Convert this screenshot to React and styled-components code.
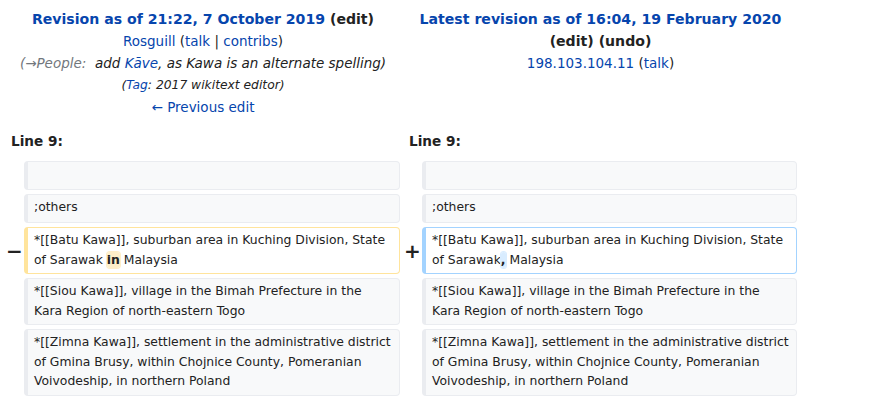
import React from 'react';
import styled, { createGlobalStyle } from 'styled-components';

const GlobalStyle = createGlobalStyle`
  body {
    margin: 0;
    background: #fff;
    font-family: 'DejaVu Sans', sans-serif;
    color: #222;
  }
`;

const Page = styled.div`
  padding: 8px 0 0 6px;
  width: 792px;
`;

const Grid = styled.div`
  display: grid;
  grid-template-columns: 14px 376px 14px 375px;
  column-gap: 4px;
  row-gap: 4px;
  align-items: center;
`;

const Header = styled.div`
  grid-column: span 2;
  text-align: center;
  font-size: 13.5px;
  line-height: 22px;
  align-self: start;
`;

const Title = styled.div`
  font-weight: bold;
  font-size: 14.1px;
  color: #0645ad;
`;

const Dark = styled.span`
  color: #222;
`;

const Link = styled.span`
  color: #0645ad;
`;

const Summary = styled.div`
  font-style: italic;
  color: #222;
  white-space: pre;
`;

const Autocomment = styled.span`
  color: #72777d;
`;

const Tag = styled.div`
  font-style: italic;
  font-size: 12.3px;
`;

const LineNo = styled.div`
  grid-column: span 2;
  font-weight: bold;
  font-size: 13.6px;
  padding: 11px 0 8px 5px;
`;

const Marker = styled.div`
  font-weight: bold;
  font-size: 20px;
  line-height: 1;
  text-align: center;
  color: #222;
`;

const Cell = styled.div`
  box-sizing: border-box;
  font-size: 12.38px;
  line-height: 19.5px;
  padding: 3px 7px 3px 6px;
  min-height: 29px;
  border-style: solid;
  border-width: 1px 1px 1px 4px;
  border-radius: 4px;
  border-color: ${(p) =>
    p.$kind === 'del' ? '#ffe49c' : p.$kind === 'add' ? '#a3d3ff' : '#eaecf0'};
  background: ${(p) => (p.$kind ? '#fff' : '#f8f9fa')};
  align-self: stretch;
`;

const Change = styled.span`
  font-weight: bold;
  border-radius: 3px;
  padding: 1px 0;
  background: ${(p) => (p.$kind === 'del' ? '#feeec8' : '#d8ecff')};
  box-shadow: 0 0 0 1px ${(p) => (p.$kind === 'del' ? '#feeec8' : '#d8ecff')};
`;

const context = ['', ';others'];

const after = [
  '*[[Siou Kawa]], village in the Bimah Prefecture in the Kara Region of north-eastern Togo',
  '*[[Zimna Kawa]], settlement in the administrative district of Gmina Brusy, within Chojnice County, Pomeranian Voivodeship, in northern Poland',
];

export default function App() {
  return (
    <>
      <GlobalStyle />
      <Page>
        <Grid>
          <Header>
            <Title>
              Revision as of 21:22, 7 October 2019 <Dark>(edit)</Dark>
            </Title>
            <div>
              <Link>Rosguill</Link> (<Link>talk</Link> | <Link>contribs</Link>)
            </div>
            <Summary>
              <Autocomment>(→People: </Autocomment> add <Link>Kāve</Link>, as Kawa is an alternate spelling)
            </Summary>
            <Tag>
              (<Link>Tag</Link>: 2017 wikitext editor)
            </Tag>
            <div>
              <Link>← Previous edit</Link>
            </div>
          </Header>
          <Header>
            <Title>Latest revision as of 16:04, 19 February 2020</Title>
            <Title>
              <Dark>(edit) (undo)</Dark>
            </Title>
            <div>
              <Link>198.103.104.11</Link> (<Link>talk</Link>)
            </div>
          </Header>

          <LineNo>Line 9:</LineNo>
          <LineNo>Line 9:</LineNo>

          {context.map((t, i) => (
            <React.Fragment key={i}>
              <Marker />
              <Cell>{t}</Cell>
              <Marker />
              <Cell>{t}</Cell>
            </React.Fragment>
          ))}

          <Marker>−</Marker>
          <Cell $kind="del">
            *[[Batu Kawa]], suburban area in Kuching Division, State of Sarawak <Change $kind="del">in</Change> Malaysia
          </Cell>
          <Marker>+</Marker>
          <Cell $kind="add">
            *[[Batu Kawa]], suburban area in Kuching Division, State of Sarawak<Change $kind="add">,</Change> Malaysia
          </Cell>

          {after.map((t, i) => (
            <React.Fragment key={i}>
              <Marker />
              <Cell>{t}</Cell>
              <Marker />
              <Cell>{t}</Cell>
            </React.Fragment>
          ))}
        </Grid>
      </Page>
    </>
  );
}
